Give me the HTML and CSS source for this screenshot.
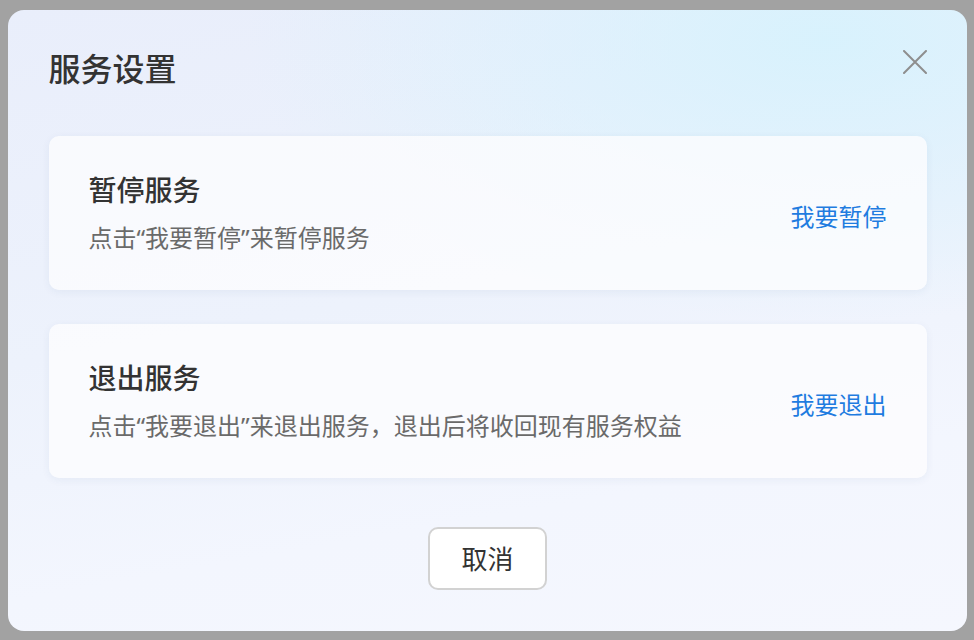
FILE: index.html
```html
<!DOCTYPE html>
<html lang="zh-CN">
<head>
    <meta charset="UTF-8">
    <meta name="viewport" content="width=device-width, initial-scale=1.0">
    <link rel="stylesheet" href="styles.css">
    <title>服务设置</title>
</head>
<body>
    <div class="mask">
        <div class="dialog">
            <div class="dialog-header">
                <h1>服务设置</h1>
                <button class="close-btn" type="button" aria-label="关闭">
                    <svg width="24" height="24" viewBox="0 0 24 24">
                        <path d="M1 1 L23 23 M23 1 L1 23" stroke="#8e8e8e" stroke-width="2" fill="none" stroke-linecap="round"/>
                    </svg>
                </button>
            </div>

            <div class="card-list">
                <div class="card">
                    <div class="card-text">
                        <h2>暂停服务</h2>
                        <p>点击“我要暂停”来暂停服务</p>
                    </div>
                    <a class="card-link" href="#">我要暂停</a>
                </div>
                <div class="card">
                    <div class="card-text">
                        <h2>退出服务</h2>
                        <p>点击“我要退出”来退出服务，退出后将收回现有服务权益</p>
                    </div>
                    <a class="card-link" href="#">我要退出</a>
                </div>
            </div>

            <div class="dialog-footer">
                <button class="cancel-btn" type="button">取消</button>
            </div>
        </div>
    </div>
</body>
</html>
```

FILE: styles.css
```css
body {
    margin: 0;
    padding: 0;
    font-family: "Noto Sans", "Noto Sans CJK SC", sans-serif;
    background-color: #a2a2a2;
}

.mask {
    height: 100vh;
    display: flex;
    justify-content: center;
    align-items: center;
}

.dialog {
    width: 959px;
    height: 621px;
    box-sizing: border-box;
    padding: 43px 40px 40px 41px;
    border-radius: 16px;
    background:
        radial-gradient(ellipse 60% 45% at 85% 5%, rgba(214, 242, 253, 0.9), rgba(214, 242, 253, 0) 100%),
        linear-gradient(170deg, #e9eefb 0%, #edf2fc 45%, #f3f6fe 75%, #f5f7fe 100%);
    display: flex;
    flex-direction: column;
}

.dialog-header {
    display: flex;
    justify-content: space-between;
    align-items: flex-start;
}

.dialog-header h1 {
    margin: 0;
    font-size: 32px;
    line-height: 32px;
    font-weight: 500;
    color: #333;
}

.close-btn {
    width: 24px;
    height: 24px;
    padding: 0;
    margin-top: -3px;
    border: none;
    background: none;
    cursor: pointer;
}

.close-btn svg {
    display: block;
}

.card-list {
    margin-top: 51px;
    display: flex;
    flex-direction: column;
    gap: 34px;
}

.card {
    height: 154px;
    box-sizing: border-box;
    padding: 40px;
    border-radius: 10px;
    background-color: rgba(252, 252, 254, 0.8);
    box-shadow: 0 2px 8px rgba(40, 60, 120, 0.06);
    display: flex;
    justify-content: space-between;
    align-items: center;
}

.card-text h2 {
    margin: 0;
    font-size: 28px;
    line-height: 28px;
    font-weight: 500;
    color: #333;
}

.card-text p {
    margin: 22px 0 0;
    font-size: 24px;
    line-height: 24px;
    color: #6a6a6a;
}

.card-link {
    margin-top: 8px;
    font-size: 24px;
    line-height: 24px;
    color: #1f7ce0;
    text-decoration: none;
}

.dialog-footer {
    margin-top: 49px;
    display: flex;
    justify-content: center;
}

.cancel-btn {
    width: 119px;
    height: 63px;
    border: 2px solid #d2d2d2;
    border-radius: 10px;
    background-color: #fff;
    font-family: inherit;
    font-size: 26px;
    color: #333;
    cursor: pointer;
}
```
